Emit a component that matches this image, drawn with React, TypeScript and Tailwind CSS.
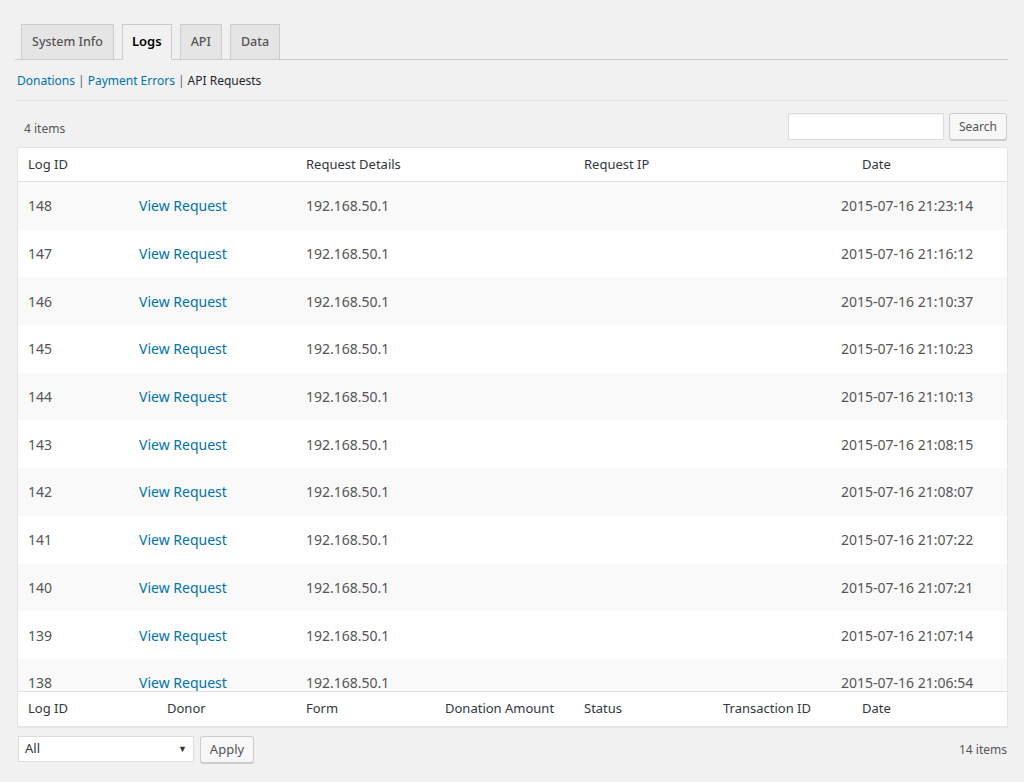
import React from "react";

const tabs = ["System Info", "Logs", "API", "Data"];

const rows = [
  { id: 148, date: "2015-07-16 21:23:14" },
  { id: 147, date: "2015-07-16 21:16:12" },
  { id: 146, date: "2015-07-16 21:10:37" },
  { id: 145, date: "2015-07-16 21:10:23" },
  { id: 144, date: "2015-07-16 21:10:13" },
  { id: 143, date: "2015-07-16 21:08:15" },
  { id: 142, date: "2015-07-16 21:08:07" },
  { id: 141, date: "2015-07-16 21:07:22" },
  { id: 140, date: "2015-07-16 21:07:21" },
  { id: 139, date: "2015-07-16 21:07:14" },
  { id: 138, date: "2015-07-16 21:06:54" },
];

const footerCols = [
  "Log ID",
  "Donor",
  "Form",
  "Donation Amount",
  "Status",
  "Transaction ID",
  "Date",
];

const App = () => {
  return (
    <div
      className="min-h-[782px] bg-[#f1f1f1] text-[#555] pl-[15px] pr-[16px] pt-[24px]"
      style={{ fontFamily: '"Noto Sans", "Open Sans", sans-serif' }}
    >
      {/* tabs */}
      <div className="flex gap-[8px] pl-[6px] border-b border-[#ccc] h-[36px]">
        {tabs.map((t) => (
          <div
            key={t}
            className={
              t === "Logs"
                ? "h-[36px] px-[9px] flex items-center border border-[#ccc] border-b-[#f1f1f1] bg-[#f1f1f1] text-[#000] text-[13px] font-semibold"
                : "h-[35px] px-[10px] flex items-center border border-[#ccc] border-b-0 bg-[#e5e5e5] text-[#555] text-[12.5px] font-medium"
            }
          >
            {t}
          </div>
        ))}
      </div>

      {/* sub links */}
      <div className="pl-[2px] pt-[11px] pb-[9px] text-[12px] leading-[20px] border-b border-[#e1e1e1]">
        <span className="text-[#0073aa]">Donations</span>
        <span className="text-[#666] px-[3px]">|</span>
        <span className="text-[#0073aa]">Payment Errors</span>
        <span className="text-[#666] px-[3px]">|</span>
        <span className="text-[#23282d]">API Requests</span>
      </div>

      {/* top nav */}
      <div className="flex items-center justify-between pl-[9px] pr-[1px] pt-[12px] pb-[7px]">
        <span className="text-[12px] pt-[5px]">4 items</span>
        <div className="flex gap-[5px]">
          <input className="w-[156px] h-[27px] bg-white border border-[#ddd] shadow-[inset_0_1px_2px_rgba(0,0,0,0.07)] outline-none" />
          <button className="h-[27px] w-[58px] text-[12px] text-[#555] bg-[#f7f7f7] border border-[#ccc] rounded-[3px] shadow-[0_1px_0_#ccc]">
            Search
          </button>
        </div>
      </div>

      {/* table */}
      <div className="mx-[2px] w-[991px] bg-white border border-[#e5e5e5] shadow-[0_1px_1px_rgba(0,0,0,0.04)] text-[14px]">
        <div className="flex h-[34px] items-center border-b border-[#e1e1e1] text-[13px] text-[#32373c]">
          <div className="w-[288px] pl-[10px]">Log ID</div>
          <div className="w-[278px]">Request Details</div>
          <div className="w-[265px]">Request IP</div>
          <div className="flex-1 pl-[13px]">Date</div>
        </div>
        <div className="h-[509px] overflow-hidden">
          {rows.map((r, i) => (
            <div
              key={r.id}
              className={
                i % 2 === 0
                  ? "flex h-[47.7px] items-center bg-[#f9f9f9]"
                  : "flex h-[47.7px] items-center bg-white"
              }
            >
              <div className="w-[121px] pl-[10px]">{r.id}</div>
              <div className="w-[167px] text-[#0073aa]">View Request</div>
              <div className="w-[535px]">192.168.50.1</div>
              <div className="flex-1">{r.date}</div>
            </div>
          ))}
        </div>
        <div className="flex h-[35px] items-center border-t border-[#e1e1e1] pl-[10px] text-[13px] text-[#32373c]">
          {footerCols.map((c) => (
            <div key={c} className="w-[139px]">
              {c}
            </div>
          ))}
        </div>
      </div>

      {/* bottom nav */}
      <div className="flex items-center justify-between pl-[3px] pr-[1px] pt-[9px]">
        <div className="flex gap-[6px]">
          <div className="w-[176px] h-[26px] bg-white border border-[#ddd] flex items-center justify-between pl-[6px] pr-[6px] text-[13px] text-[#32373c]">
            <span>All</span>
            <span className="text-[9px]">▼</span>
          </div>
          <button className="h-[27px] w-[54px] text-[13px] text-[#555] bg-[#f7f7f7] border border-[#ccc] rounded-[3px] shadow-[0_1px_0_#ccc]">
            Apply
          </button>
        </div>
        <span className="text-[12px]">14 items</span>
      </div>
    </div>
  );
};

export default App;
